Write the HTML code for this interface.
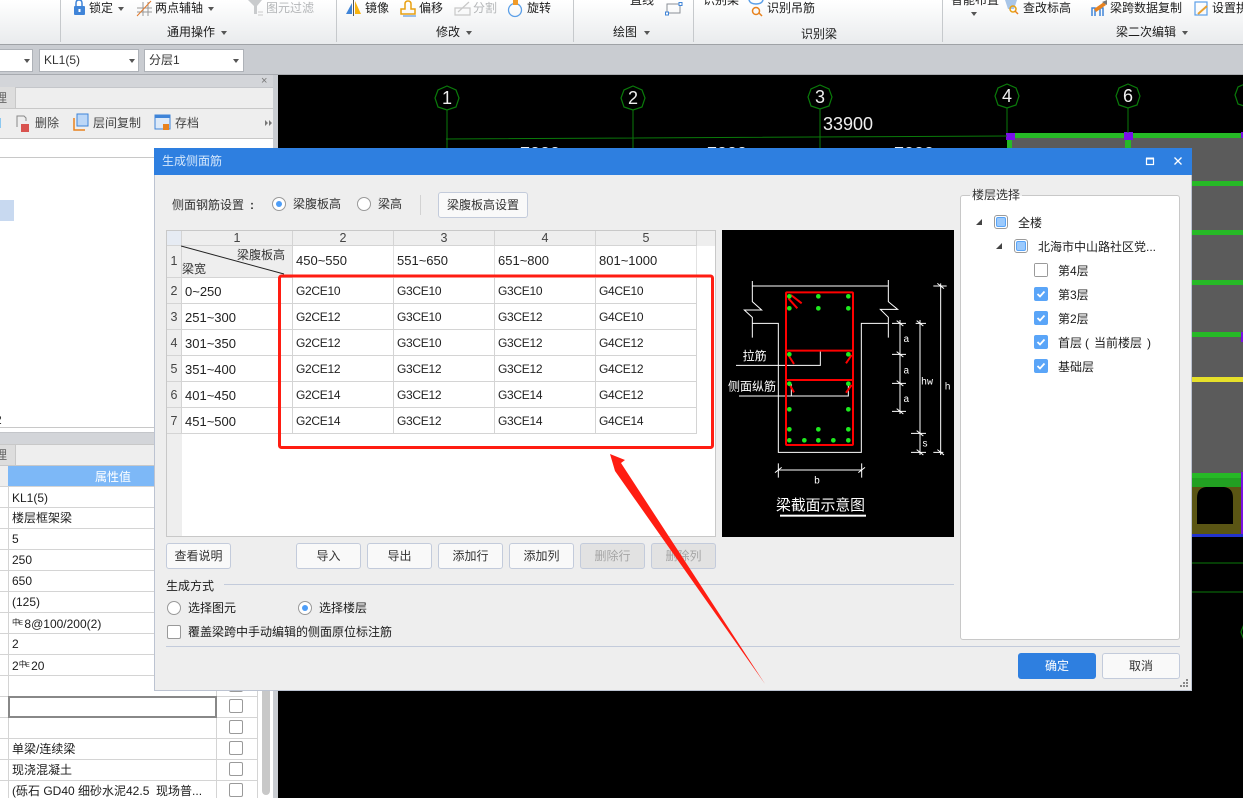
<!DOCTYPE html>
<html><head><meta charset="utf-8">
<style>
html,body{margin:0;padding:0}
body{width:1243px;height:798px;overflow:hidden;position:relative;background:#000;font-family:"Liberation Sans","Noto Sans CJK SC",sans-serif;font-size:12px;color:#1c1c1c}
.a{position:absolute;box-sizing:border-box}
.t{position:absolute;white-space:nowrap;line-height:14px;height:14px}
.g{color:#b4b6b8}
.tri{position:absolute;width:0;height:0;border-left:3.5px solid transparent;border-right:3.5px solid transparent;border-top:4px solid #555}
.sep{position:absolute;top:0;width:1px;height:42px;background:#c6c9cc}
.combo{position:absolute;top:49px;height:23px;background:#fff;border:1px solid #aeb2b8;box-sizing:border-box;line-height:21px;padding-left:4px;color:#333}
.btn{position:absolute;box-sizing:border-box;height:26px;background:#f9f9f9;border:1px solid #c3cbdb;border-radius:3px;text-align:center;line-height:24px;color:#333}
.btn.d{background:#e2e2e2;color:#a5a5a5}
.radio{position:absolute;box-sizing:border-box;width:14px;height:14px;border:1px solid #999;border-radius:50%;background:#fff}
.radio.on::after{content:"";position:absolute;left:3px;top:3px;width:6px;height:6px;border-radius:50%;background:#4d9df7}
.cb{position:absolute;box-sizing:border-box;width:14px;height:14px;border:1px solid #999;border-radius:2px;background:#fff}
.pcb{position:absolute;box-sizing:border-box;width:14px;height:14px;border:1px solid #9a9a9a;border-radius:2px;background:#fff;left:229px}
.ck{position:absolute;left:1034px;width:14px;height:14px;background:#5aa5f8;border-radius:2px}
.pt{position:absolute;box-sizing:border-box;width:14px;height:14px;border:1px solid #9a9a9a;border-radius:3px;background:#fff}
.pt::after{content:"";position:absolute;left:1px;top:1px;width:10px;height:10px;background:#9ccafc;border:1px solid #5aa5f8;box-sizing:border-box;border-radius:2px}
.ar{position:absolute;width:0;height:0;border-style:solid;border-width:0 0 6px 6px;border-color:transparent transparent #444 transparent}
.grid{position:absolute;left:167px;top:231px;display:grid;grid-template-columns:15px 111px 101px 101px 101px 101px;grid-template-rows:15px 32px repeat(6,26px);font-size:12px;letter-spacing:-.3px}
.grid div{box-sizing:border-box;border-right:1px solid #d4d4d4;border-bottom:1px solid #d4d4d4;background:#fff;padding-left:3px;line-height:27px;white-space:nowrap;color:#222}
.grid .h{background:#eee;text-align:center;padding:0;color:#444;line-height:15px;font-size:12.500px;letter-spacing:0}
.grid .r{background:#eee;text-align:center;padding:0;color:#444;font-size:12.500px;letter-spacing:0}
.grid .v{line-height:30px;border-bottom:1px solid #fff;border-right-color:#e2e2e2;font-size:13px;letter-spacing:0}
.grid .w{font-size:13px;letter-spacing:0}
.pr{position:absolute;left:0;width:216px;height:1px;background:#d4d4d4}
</style></head><body>

<!-- CAD background -->
<svg class="a" style="left:0;top:0" width="1243" height="798" viewBox="0 0 1243 798">
<rect width="1243" height="798" fill="#000"/>
<rect x="1007" y="133" width="236" height="402" fill="#5b5b5b"/>
<g fill="#26b926">
<rect x="1012" y="133" width="231" height="5"/>
<rect x="1180" y="181" width="63" height="5"/>
<rect x="1180" y="230" width="63" height="5"/>
<rect x="1180" y="280" width="63" height="5"/>
<rect x="1180" y="332" width="63" height="5"/>
<rect x="1180" y="473" width="63" height="5"/>
<rect x="1007" y="139" width="5" height="12"/>
<rect x="1125" y="139" width="6" height="12"/>
</g>
<rect x="1180" y="478" width="63" height="10" fill="#22a022"/>
<rect x="1180" y="377" width="63" height="5" fill="#e6e02a"/>
<rect x="1180" y="487" width="62" height="47" fill="#5a5514"/>
<path d="M1197 524V498Q1197 488 1206 487H1224Q1233 488 1233 498V524Z" fill="#000"/>
<rect x="1180" y="534" width="63" height="3" fill="#2233cc"/>
<rect x="1241" y="472" width="2" height="62" fill="#7a10e0"/>
<rect x="1241" y="132" width="2" height="6" fill="#7a10e0"/>
<rect x="1241" y="332" width="2" height="10" fill="#7a10e0"/>
<rect x="1006" y="133" width="9" height="7" fill="#7a10e8"/>
<rect x="1124" y="132" width="9" height="8" fill="#7a10e8"/>
<path d="M1180 563H1243M1180 592H1243" stroke="#0a7a0a"/>
<path d="M446 139L1007 136M447 110V150M633 110V150M820 109V150M1007 108V133M1128 108V133" stroke="#0a7a0a" fill="none"/>
<g fill="none" stroke="#0a7a0a" stroke-width="1.2">
<polygon points="447,86 456,90 459,98 456,107 447,110 438,107 435,98 438,90"/>
<polygon points="633,86 642,90 645,98 642,107 633,110 624,107 621,98 624,90"/>
<polygon points="820,85 829,89 832,97 829,106 820,109 811,106 808,97 811,89"/>
<polygon points="1007,84 1016,88 1019,96 1016,105 1007,108 998,105 995,96 998,88"/>
<polygon points="1128,84 1137,88 1140,96 1137,105 1128,108 1119,105 1116,96 1119,88"/>
<polygon points="1247,83 1238,87 1235,95 1238,104 1247,107"/>
<path d="M1244 624 1241 632 1244 640"/>
</g>
<g fill="#eee" font-size="18" text-anchor="middle" font-family="Liberation Sans">
<text x="447" y="104">1</text><text x="633" y="104">2</text><text x="820" y="103">3</text><text x="1007" y="102">4</text><text x="1128" y="102">6</text>
<text x="848" y="130" font-size="18">33900</text>
<text x="540" y="160">7000</text><text x="727" y="160">7000</text><text x="914" y="160">7000</text>
</g>
</svg>

<!-- Ribbon -->
<div class="a" style="left:0;top:0;width:1243px;height:45px;background:linear-gradient(#fff,#e9ebed);border-bottom:1px solid #9fa2a6"></div>
<div class="a" style="left:0;top:45px;width:1243px;height:30px;background:#c9ccd1;border-bottom:1px solid #a8abb0"></div>
<div class="sep" style="left:60px"></div><div class="sep" style="left:336px"></div><div class="sep" style="left:573px"></div><div class="sep" style="left:693px"></div><div class="sep" style="left:942px"></div>

<svg class="a" style="left:0;top:0" width="1243" height="45" viewBox="0 0 1243 45" fill="none">
<!-- lock -->
<path d="M76 6V3Q76 0 79 0T82 3V6" stroke="#3f84d8" stroke-width="1.5"/><rect x="74" y="6" width="11" height="9" rx="1" fill="#3f84d8"/><rect x="78.500" y="9" width="2" height="3" fill="#fff"/>
<!-- axis -->
<path d="M137 8H152M137 12H152M143 2V16M148 2V16" stroke="#999"/><path d="M137 16L151 1" stroke="#e27a2b"/>
<!-- filter -->
<path d="M248 0H262L257 6V14H254V6Z" fill="#c9cbcd"/><path d="M258 12H263M258 15H263" stroke="#ccc"/>
<!-- mirror -->
<path d="M346 14L352 3V14Z" fill="#3f84d8"/><path d="M355 1V14H361Z" fill="#f8b30f"/><path d="M353.500 0V16" stroke="#555"/>
<!-- offset -->
<path d="M401 14V9H405V4Q405 1 408 1T411 4V9H415V14Z" stroke="#e8a010" stroke-width="1.500"/><path d="M403 16H416" stroke="#3f84d8"/>
<!-- split -->
<path d="M455 15V8H470V15ZM458 12L469 2" stroke="#c8c8c8" stroke-width="1.200"/>
<!-- rotate -->
<circle cx="515" cy="10" r="6.500" stroke="#5b9fe8" stroke-width="1.300"/><path d="M513 0H518V5H513Z" fill="#f09a28"/>
<!-- rect -->
<rect x="667" y="4" width="13" height="9" stroke="#8a8f96"/><rect x="665.500" y="12" width="3" height="3" fill="#fff" stroke="#3f84d8"/><rect x="679" y="2.500" width="3" height="3" fill="#fff" stroke="#3f84d8"/>
<!-- recog icons -->
<path d="M749 0Q750 4 756 4T763 0" stroke="#5b9fe8" stroke-width="1.500"/><circle cx="756" cy="11" r="3.500" stroke="#e8821e" stroke-width="1.500"/><path d="M759 13L762 16" stroke="#e8821e" stroke-width="1.500"/>
<path d="M1005 0H1017L1014 9H1008Z" fill="#a9c6e8"/><circle cx="1013" cy="9" r="3" stroke="#e8a010" stroke-width="1.500"/><path d="M1015 11 1018 14" stroke="#e8821e" stroke-width="1.500"/>
<path d="M1092 16V8H1095V16M1100 16V8H1103V16" stroke="#3f84d8" stroke-width="1.500"/><path d="M1094 9L1104 2L1106 5L1096 12Z" fill="#e8821e"/><path d="M1102 2L1107 0V5Z" fill="#777"/>
<rect x="1195" y="2" width="12" height="13" stroke="#5b9fe8" stroke-width="1.200"/><path d="M1198 14L1207 6" stroke="#e8a030" stroke-width="2"/>
</svg>

<span class="t" style="left:89px;top:1px">锁定</span><div class="tri" style="left:118px;top:7px"></div>
<span class="t" style="left:155px;top:1px">两点辅轴</span><div class="tri" style="left:208px;top:7px"></div>
<span class="t g" style="left:266px;top:1px">图元过滤</span>
<span class="t" style="left:365px;top:1px">镜像</span>
<span class="t" style="left:419px;top:1px">偏移</span>
<span class="t g" style="left:473px;top:1px">分割</span>
<span class="t" style="left:527px;top:1px">旋转</span>
<span class="t" style="left:167px;top:25px">通用操作</span><div class="tri" style="left:221px;top:31px"></div>
<span class="t" style="left:436px;top:25px">修改</span><div class="tri" style="left:466px;top:31px"></div>
<span class="t" style="left:630px;top:-7px">直线</span>
<span class="t" style="left:613px;top:25px">绘图</span><div class="tri" style="left:644px;top:31px"></div>
<span class="t" style="left:703px;top:-7px">识别梁</span>
<span class="t" style="left:767px;top:1px">识别吊筋</span>
<span class="t" style="left:801px;top:27px">识别梁</span>
<span class="t" style="left:951px;top:-7px">智能布置</span><div class="tri" style="left:971px;top:12px"></div>
<span class="t" style="left:1023px;top:1px">查改标高</span>
<span class="t" style="left:1110px;top:1px">梁跨数据复制</span>
<span class="t" style="left:1212px;top:1px">设置拱</span>
<span class="t" style="left:1116px;top:25px">梁二次编辑</span><div class="tri" style="left:1182px;top:31px"></div>

<div class="combo" style="left:-10px;width:43px"></div><div class="tri" style="left:24px;top:59px"></div>
<div class="combo" style="left:39px;width:100px;font-size:12px">KL1(5)</div><div class="tri" style="left:129px;top:59px"></div>
<div class="combo" style="left:144px;width:100px">分层1</div><div class="tri" style="left:233px;top:59px"></div>

<!-- Left panel -->
<div class="a" style="left:0;top:75px;width:278px;height:723px;background:#c9ccd1"></div>
<div class="a" style="left:0;top:75px;width:273px;height:723px;background:#fff"></div>
<div class="a" style="left:0;top:75px;width:273px;height:12px;background:#d3d5d9"></div>
<span class="t" style="left:261px;top:74px;color:#777;font-size:11px">×</span>
<div class="a" style="left:0;top:87px;width:273px;height:22px;background:#eee;border-top:1px solid #c4c6ca;border-bottom:1px solid #c8c8c8"></div>
<div class="a" style="left:0;top:87px;width:16px;height:21px;background:#ddd;border-right:1px solid #c8c8c8"></div>
<span class="t" style="left:-5px;top:91px;color:#666">理</span>
<div class="a" style="left:0;top:109px;width:273px;height:30px;background:#eee;border-bottom:1px solid #c8c8c8"></div>
<svg class="a" style="left:0;top:113px" width="273" height="22" fill="none">
<rect x="-4" y="5" width="5" height="10" fill="#8cc8f0"/>
<path d="M17 14V3H24L26 5V8" stroke="#888"/><rect x="21" y="11" width="8" height="8" fill="#d9534f"/>
<rect x="77" y="1" width="11" height="12" fill="#bcd7f7" stroke="#3f84d8"/><path d="M74 5V17H85" stroke="#e8821e" stroke-width="1.500"/>
<rect x="155" y="2" width="15" height="14" fill="#dce9f8" stroke="#3f84d8"/><rect x="155" y="2" width="15" height="3" fill="#3f84d8"/><rect x="163" y="11" width="6" height="6" fill="#e8821e"/>
<path d="M265 7V13L268 10ZM269 7V13L272 10Z" fill="#777"/>
<circle cx="261" cy="32" r="4" stroke="#3f84d8" stroke-width="1.200"/>
</svg>
<span class="t" style="left:35px;top:116px;color:#444">删除</span>
<span class="t" style="left:93px;top:116px;color:#444">层间复制</span>
<span class="t" style="left:175px;top:116px;color:#444">存档</span>
<div class="a" style="left:0;top:157px;width:273px;height:1px;background:#c8c8c8"></div>
<div class="a" style="left:0;top:200px;width:14px;height:21px;background:#c8d9f0"></div>
<span class="t" style="left:-5px;top:413px">2</span>
<div class="a" style="left:0;top:427px;width:273px;height:1px;background:#c8c8c8"></div>
<div class="a" style="left:0;top:432px;width:273px;height:12px;background:#d3d5d9;border-top:1px solid #c4c6ca"></div>
<div class="a" style="left:0;top:444px;width:273px;height:22px;background:#eee;border-top:1px solid #c8c8c8;border-bottom:1px solid #c8c8c8"></div>
<div class="a" style="left:0;top:444px;width:16px;height:22px;background:#ddd;border:1px solid #c8c8c8;border-left:0"></div>
<span class="t" style="left:-5px;top:448px;color:#666">理</span>
<div class="a" style="left:0;top:466px;width:8px;height:21px;background:#eee"></div>
<div class="a" style="left:8px;top:466px;width:250px;height:21px;background:#7db8f7"></div>
<span class="t" style="left:95px;top:470px;color:#fff">属性值</span>
<!-- property rows -->
<div class="pr" style="top:486px;width:257px"></div><div class="pr" style="top:507px;width:257px"></div><div class="pr" style="top:528px;width:257px"></div><div class="pr" style="top:549px;width:257px"></div><div class="pr" style="top:570px;width:257px"></div><div class="pr" style="top:591px;width:257px"></div><div class="pr" style="top:612px;width:257px"></div><div class="pr" style="top:633px;width:257px"></div><div class="pr" style="top:654px;width:257px"></div><div class="pr" style="top:675px;width:257px"></div><div class="pr" style="top:696px;width:257px"></div><div class="pr" style="top:717px;width:257px"></div><div class="pr" style="top:738px;width:257px"></div><div class="pr" style="top:759px;width:257px"></div><div class="pr" style="top:780px;width:257px"></div>
<div class="a" style="left:8px;top:487px;width:1px;height:311px;background:#d4d4d4"></div>
<div class="a" style="left:216px;top:487px;width:1px;height:311px;background:#d4d4d4"></div>
<div class="a" style="left:257px;top:466px;width:1px;height:332px;background:#d4d4d4"></div>
<div class="a" style="left:262px;top:600px;width:8px;height:195px;background:#c8c8c8;border-radius:4px"></div>
<div class="a" style="left:8px;top:696px;width:209px;height:22px;background:#fff;border:2px solid #888"></div>
<span class="t" style="left:12px;top:491px">KL1(5)</span>
<span class="t" style="left:12px;top:511px">楼层框架梁</span>
<span class="t" style="left:12px;top:532px">5</span>
<span class="t" style="left:12px;top:553px">250</span>
<span class="t" style="left:12px;top:574px">650</span>
<span class="t" style="left:12px;top:595px">(125)</span>
<span class="t" style="left:12px;top:616px"><span style="font-size:8px;vertical-align:3px;letter-spacing:-1px">中<span style="font-size:6px">E</span></span>&#8201;8@100/200(2)</span>
<span class="t" style="left:12px;top:637px">2</span>
<span class="t" style="left:12px;top:658px">2<span style="font-size:8px;vertical-align:3px;letter-spacing:-1px">中<span style="font-size:6px">E</span></span>&#8201;20</span>
<span class="t" style="left:12px;top:742px">单梁/连续梁</span>
<span class="t" style="left:12px;top:763px">现浇混凝土</span>
<span class="t" style="left:12px;top:784px">(砾石 GD40 细砂水泥42.5&nbsp; 现场普...</span>
<div class="pcb" style="top:678px"></div><div class="pcb" style="top:699px"></div><div class="pcb" style="top:720px"></div><div class="pcb" style="top:741px"></div><div class="pcb" style="top:762px"></div><div class="pcb" style="top:783px"></div>

<!-- Dialog -->
<div class="a" style="left:154px;top:148px;width:1038px;height:543px;background:#eee;border:1px solid #bcc3d1;border-top:0"></div>
<div class="a" style="left:154px;top:148px;width:1038px;height:27px;background:#2e7fe0"></div>
<span class="t" style="left:162px;top:154px;color:#d6e8fc">生成侧面筋</span>
<svg class="a" style="left:1140px;top:152px" width="50" height="18" fill="none" stroke="#fff"><rect x="6.500" y="6.500" width="7" height="6" stroke-width="1.200"/><path d="M6 6.500H14" stroke-width="2"/><path d="M34.500 5.500L41.500 12.500M41.500 5.500L34.500 12.500" stroke-width="1.300"/></svg>

<span class="t" style="left:172px;top:198px;color:#333">侧面钢筋设置</span><span class="t" style="left:250px;top:198px;color:#333;font-weight:bold">:</span>
<div class="radio on" style="left:272px;top:197px"></div>
<span class="t" style="left:293px;top:197px;color:#333">梁腹板高</span>
<div class="radio" style="left:357px;top:197px"></div>
<span class="t" style="left:378px;top:197px;color:#333">梁高</span>
<div class="a" style="left:420px;top:195px;width:1px;height:20px;background:#d2d2d2"></div>
<div class="btn" style="left:438px;top:192px;width:90px">梁腹板高设置</div>

<!-- Table -->
<div class="a" style="left:166px;top:230px;width:550px;height:307px;background:#fff;border:1px solid #c8c8c8"></div>
<div class="a" style="left:167px;top:231px;width:15px;height:305px;background:#eee"></div>
<div class="a" style="left:697px;top:231px;width:18px;height:15px;background:#eee"></div>
<div class="grid">
<div class="h" style="background:#e6ebf3"></div><div class="h">1</div><div class="h">2</div><div class="h">3</div><div class="h">4</div><div class="h">5</div>
<div class="r" style="line-height:31px">1</div><div style="background:#eee"></div><div class="v">450~550</div><div class="v">551~650</div><div class="v">651~800</div><div class="v">801~1000</div>
<div class="r">2</div><div class="w">0~250</div><div>G2CE10</div><div>G3CE10</div><div>G3CE10</div><div>G4CE10</div>
<div class="r">3</div><div class="w">251~300</div><div>G2CE12</div><div>G3CE10</div><div>G3CE12</div><div>G4CE10</div>
<div class="r">4</div><div class="w">301~350</div><div>G2CE12</div><div>G3CE10</div><div>G3CE12</div><div>G4CE12</div>
<div class="r">5</div><div class="w">351~400</div><div>G2CE12</div><div>G3CE12</div><div>G3CE12</div><div>G4CE12</div>
<div class="r">6</div><div class="w">401~450</div><div>G2CE14</div><div>G3CE12</div><div>G3CE14</div><div>G4CE12</div>
<div class="r">7</div><div class="w">451~500</div><div>G2CE14</div><div>G3CE12</div><div>G3CE14</div><div>G4CE14</div>
</div>
<svg class="a" style="left:181px;top:245px" width="106" height="32"><path d="M0 1L103 29" stroke="#222"/></svg>
<span class="t" style="left:237px;top:248px;color:#333">梁腹板高</span>
<span class="t" style="left:182px;top:262px;color:#333">梁宽</span>

<!-- Section drawing -->
<svg class="a" style="left:720px;top:230px" width="240" height="310" viewBox="0 0 720 930" fill="none">
<rect x="6" y="0" width="696" height="921" fill="#000"/>
<g stroke="#fff" stroke-width="3">
<path d="M97 153V215L125 240H73L97 262V323M97 168H505M505 150V215L533 238H481L505 262V323"/>
<path d="M97 280H175V667H424V280H505"/>
<path d="M48 406H301V362M57 498H385V462M214 462V498"/>
<path d="M540 270V552M516 280H558M516 373H558M516 460H558M516 544H558M530 272L550 288M530 365L550 381M530 452L550 468M530 536L550 552"/>
<path d="M600 270V675M587 280H618M573 610H618M573 667H618M590 272L610 288M590 602L610 618M590 659L610 675"/>
<path d="M662 160V675M640 168H680M640 667H670M652 160L672 176M652 659L672 675"/>
<path d="M175 700V743M425 700V743M175 720H425M165 728L185 712M415 728L435 712"/>
</g>
<g stroke="#f00" stroke-width="6">
<rect x="198" y="187" width="201" height="458" rx="3"/>
<path d="M198 362H399M198 450H399"/>
<path d="M213 195L245 220M205 205L232 235M205 375L222 402M395 375L378 400M208 462L222 487M395 465L378 488"/>
</g>
<g fill="#1eea1e">
<circle cx="208" cy="199" r="7"/><circle cx="295" cy="199" r="7"/><circle cx="385" cy="199" r="7"/><circle cx="208" cy="235" r="7"/><circle cx="295" cy="235" r="7"/><circle cx="385" cy="235" r="7"/><circle cx="208" cy="373" r="7"/><circle cx="385" cy="373" r="7"/><circle cx="208" cy="461" r="7"/><circle cx="385" cy="461" r="7"/><circle cx="208" cy="538" r="7"/><circle cx="385" cy="538" r="7"/><circle cx="208" cy="598" r="7"/><circle cx="295" cy="598" r="7"/><circle cx="385" cy="598" r="7"/><circle cx="208" cy="631" r="7"/><circle cx="253" cy="631" r="7"/><circle cx="295" cy="631" r="7"/><circle cx="340" cy="631" r="7"/><circle cx="385" cy="631" r="7"/>
</g>
<g fill="#fff" font-family="Liberation Sans,Noto Sans CJK SC,sans-serif" font-size="36">
<text x="68" y="390">拉筋</text>
<text x="24" y="482">侧面纵筋</text>
<text x="168" y="840" font-size="44.500">梁截面示意图</text>
<g font-size="30" font-family="Liberation Mono,monospace">
<text x="550" y="336">a</text><text x="550" y="430">a</text><text x="550" y="516">a</text>
<text x="603" y="464">hw</text><text x="674" y="478">h</text><text x="606" y="650">s</text><text x="282" y="760">b</text>
</g></g>
<rect x="180" y="854" width="258" height="6" fill="#fff"/>
</svg>

<!-- Bottom controls -->
<div class="btn" style="left:166px;top:543px;width:65px">查看说明</div>
<div class="btn" style="left:296px;top:543px;width:65px">导入</div>
<div class="btn" style="left:367px;top:543px;width:65px">导出</div>
<div class="btn" style="left:438px;top:543px;width:65px">添加行</div>
<div class="btn" style="left:509px;top:543px;width:65px">添加列</div>
<div class="btn d" style="left:580px;top:543px;width:65px">删除行</div>
<div class="btn d" style="left:651px;top:543px;width:65px">删除列</div>
<span class="t" style="left:166px;top:579px">生成方式</span>
<div class="a" style="left:224px;top:584px;width:730px;height:1px;background:#c3cbdb"></div>
<div class="radio" style="left:167px;top:601px"></div><span class="t" style="left:188px;top:601px">选择图元</span>
<div class="radio on" style="left:298px;top:601px"></div><span class="t" style="left:319px;top:601px">选择楼层</span>
<div class="cb" style="left:167px;top:625px"></div><span class="t" style="left:188px;top:625px">覆盖梁跨中手动编辑的侧面原位标注筋</span>
<div class="a" style="left:166px;top:646px;width:1014px;height:1px;background:#c3cbdb"></div>

<!-- Floor panel -->
<div class="a" style="left:960px;top:195px;width:220px;height:445px;background:#fff;border:1px solid #c8c8c8;border-radius:3px"></div>
<div class="a" style="left:970px;top:190px;width:52px;height:12px;background:linear-gradient(#eee 50%,#fff 50%)"></div>
<span class="t" style="left:972px;top:188px;color:#333">楼层选择</span>
<div class="ar" style="left:976px;top:219px"></div><div class="pt" style="left:994px;top:215px"></div><span class="t" style="left:1018px;top:216px">全楼</span>
<div class="ar" style="left:996px;top:243px"></div><div class="pt" style="left:1014px;top:239px"></div><span class="t" style="left:1038px;top:240px">北海市中山路社区党...</span>
<div class="pt" style="left:1034px;top:263px;border-radius:2px"></div><div class="a" style="left:1035px;top:264px;width:12px;height:12px;background:#fff"></div><span class="t" style="left:1058px;top:264px">第4层</span>
<div class="ck" style="top:287px"></div><span class="t" style="left:1058px;top:288px">第3层</span>
<div class="ck" style="top:311px"></div><span class="t" style="left:1058px;top:312px">第2层</span>
<div class="ck" style="top:335px"></div><span class="t" style="left:1058px;top:336px">首层</span><span class="t" style="left:1085px;top:336px">(</span><span class="t" style="left:1094px;top:336px">当前楼层</span><span class="t" style="left:1147px;top:336px">)</span>
<div class="ck" style="top:359px"></div><span class="t" style="left:1058px;top:360px">基础层</span>
<svg class="a" style="left:1034px;top:287px" width="14" height="86" fill="none" stroke="#fff" stroke-width="1.800"><path d="M3.500 7L6 9.500 10.500 4.500M3.500 31L6 33.500 10.500 28.500M3.500 55L6 57.500 10.500 52.500M3.500 79L6 81.500 10.500 76.500"/></svg>

<div class="btn" style="left:1018px;top:653px;width:78px;background:#2e7fe0;border-color:#2e7fe0;color:#fff">确定</div>
<div class="btn" style="left:1102px;top:653px;width:78px">取消</div>
<svg class="a" style="left:1180px;top:678px" width="10" height="10" fill="#888"><rect x="6" y="1" width="2" height="2"/><rect x="3" y="4" width="2" height="2"/><rect x="6" y="4" width="2" height="2"/><rect x="0" y="7" width="2" height="2"/><rect x="3" y="7" width="2" height="2"/><rect x="6" y="7" width="2" height="2"/></svg>

<!-- Red annotation -->
<svg class="a" style="left:0;top:0" width="1243" height="798" fill="none">
<rect x="279.500" y="276" width="433" height="171.500" rx="2" stroke="#ff1d12" stroke-width="3"/>
<polygon points="610,454 625,460 621,463 765,684 615,471" fill="#ff1d12"/>
</svg>
</body></html>
